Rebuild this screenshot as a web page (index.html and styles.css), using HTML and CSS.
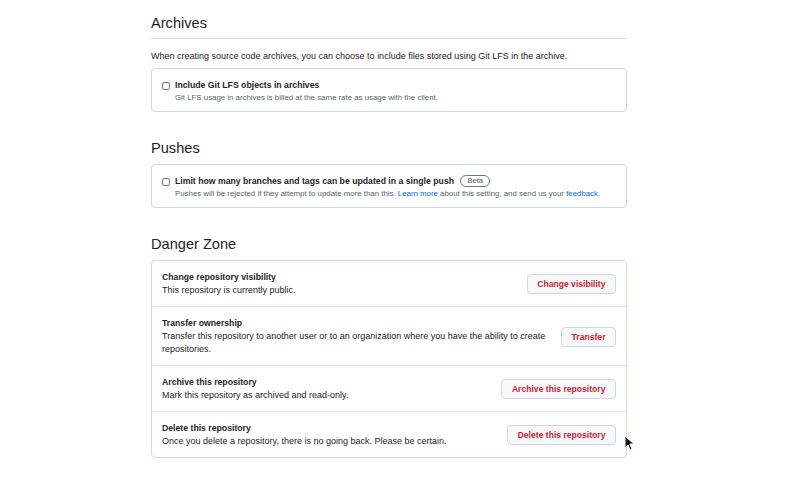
FILE: index.html
```html
<!DOCTYPE html>
<html lang="en">
<head>
<meta charset="utf-8">
<title>Repository settings</title>
<link rel="stylesheet" href="styles.css">
</head>
<body>
<main class="page">
  <section class="section">
    <h2 class="subhead subhead-rule">Archives</h2>
    <p class="lead">When creating source code archives, you can choose to include files stored using Git LFS in the archive.</p>
    <div class="box">
      <label class="check">
        <span class="checkbox"></span>
        <span class="check-body">
          <span class="check-title">Include Git LFS objects in archives</span>
          <span class="note">Git LFS usage in archives is billed at the same rate as usage with the client.</span>
        </span>
      </label>
    </div>
  </section>

  <section class="section">
    <h2 class="subhead">Pushes</h2>
    <div class="box">
      <label class="check">
        <span class="checkbox"></span>
        <span class="check-body">
          <span class="check-title">Limit how many branches and tags can be updated in a single push <span class="badge">Beta</span></span>
          <span class="note">Pushes will be rejected if they attempt to update more than this. <a href="#">Learn more</a> about this setting, and send us your <a href="#">feedback</a>.</span>
        </span>
      </label>
    </div>
  </section>

  <section class="section">
    <h2 class="subhead">Danger Zone</h2>
    <div class="box danger">
      <div class="row">
        <div class="row-text">
          <div class="row-title">Change repository visibility</div>
          <div class="row-desc">This repository is currently public.</div>
        </div>
        <button class="btn">Change visibility</button>
      </div>
      <div class="row">
        <div class="row-text">
          <div class="row-title">Transfer ownership</div>
          <div class="row-desc">Transfer this repository to another user or to an organization where you have the ability to create repositories.</div>
        </div>
        <button class="btn">Transfer</button>
      </div>
      <div class="row">
        <div class="row-text">
          <div class="row-title">Archive this repository</div>
          <div class="row-desc">Mark this repository as archived and read-only.</div>
        </div>
        <button class="btn">Archive this repository</button>
      </div>
      <div class="row">
        <div class="row-text">
          <div class="row-title">Delete this repository</div>
          <div class="row-desc">Once you delete a repository, there is no going back. Please be certain.</div>
        </div>
        <button class="btn">Delete this repository</button>
      </div>
    </div>
  </section>
</main>
<svg class="cursor" width="12" height="16" viewBox="0 0 12 16" aria-hidden="true">
  <path d="M1 1 L1 13 L4 10 L6 15 L8 14 L6 9 L10 9 Z" fill="#111" stroke="#fff" stroke-width="1"/>
</svg>
</body>
</html>
```
FILE: styles.css
```css
* { box-sizing: border-box; }
html, body { margin: 0; padding: 0; background: #ffffff; }
body {
  font-family: "Liberation Sans", Arial, sans-serif;
  color: #1f2328;
  width: 800px;
  height: 478px;
  overflow: hidden;
  position: relative;
}
.page {
  width: 476px;
  margin-left: 151px;
  padding-top: 11px;
}
.section { margin-bottom: 24px; }
.subhead {
  margin: 0;
  font-size: 14.6px;
  font-weight: 400;
  line-height: 24px;
  color: #1f2328;
}
.subhead-rule {
  border-bottom: 1px solid #d8dee4;
  padding-bottom: 3px;
}
.subhead + .box { margin-top: 4px; }
.lead {
  margin: 10px 0 5px;
  font-size: 9px;
  line-height: 14px;
}
.box {
  border: 1px solid #d0d7de;
  border-radius: 4px;
  padding: 10px 10px 8px;
}
.check {
  display: flex;
  align-items: flex-start;
  gap: 5px;
}
.checkbox {
  flex: none;
  width: 8px;
  height: 8px;
  margin-top: 2.5px;
  border: 1px solid #6e7781;
  border-radius: 2px;
  background: #fff;
}
.check-body { display: flex; flex-direction: column; }
.check-title {
  font-size: 8.7px;
  font-weight: 700;
  line-height: 13px;
}
.note {
  font-size: 7.85px;
  line-height: 11px;
  color: #5b636c;
}
.note a { color: #0969da; text-decoration: none; }
.badge {
  display: inline-block;
  margin-left: 4px;
  padding: 0 6px;
  border: 1px solid #6e7781;
  border-radius: 8px;
  font-size: 7.6px;
  font-weight: 400;
  line-height: 10px;
  color: #57606a;
  vertical-align: 1px;
}
.danger {
  border-color: #f5cfcc;
  padding: 0;
}
.row {
  display: flex;
  align-items: center;
  justify-content: space-between;
  gap: 8px;
  padding: 10px 10px 9px 10px;
  border-top: 1px solid #e3e6ea;
}
.row:first-child { border-top: none; }
.row-text { flex: 1; }
.row-title {
  font-size: 8.7px;
  font-weight: 700;
  line-height: 13px;
}
.row-desc {
  font-size: 9px;
  line-height: 13px;
}
.btn {
  flex: none;
  height: 20px;
  padding: 0 9.5px;
  font-family: inherit;
  font-size: 8.6px;
  font-weight: 700;
  color: #cf222e;
  background: #f6f8fa;
  border: 1px solid #d0d7de;
  border-radius: 4px;
}
.cursor {
  position: absolute;
  left: 624px;
  top: 435px;
}
```
